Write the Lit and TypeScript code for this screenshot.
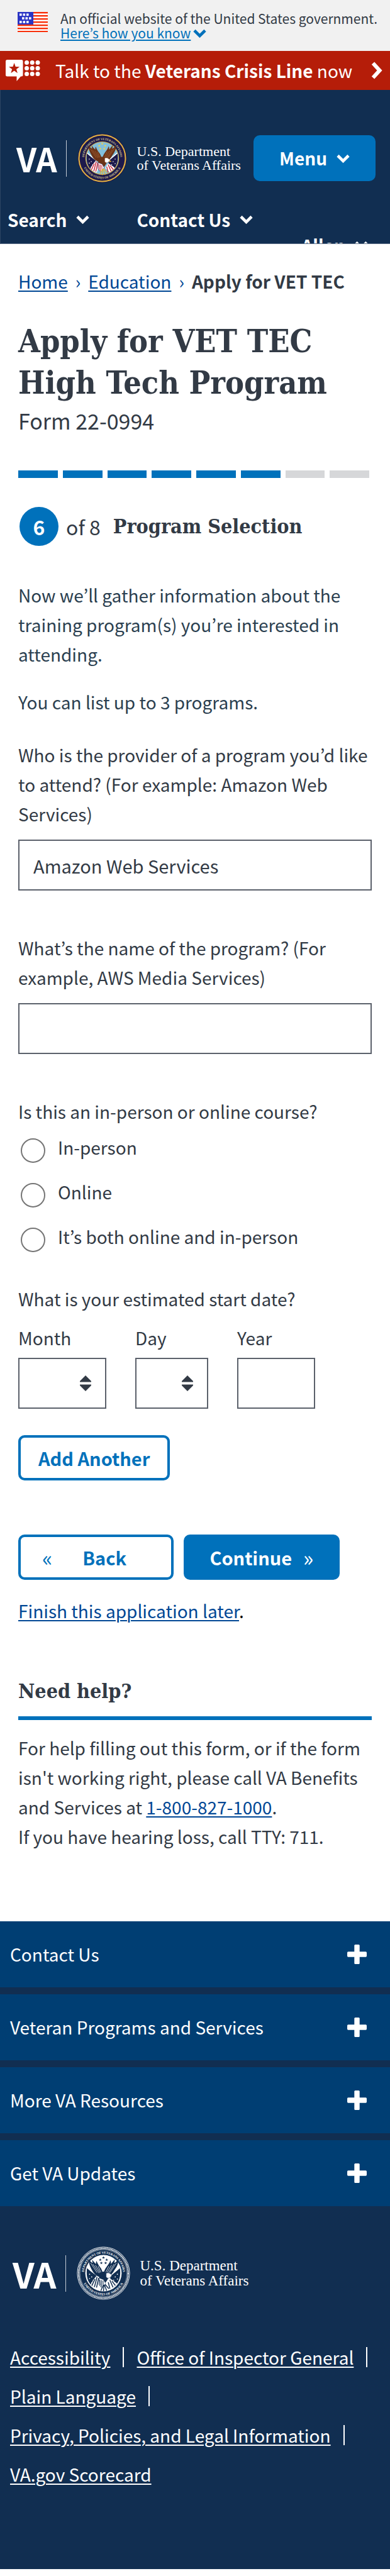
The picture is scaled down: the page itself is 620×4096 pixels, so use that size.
import { LitElement, html, css, svg } from "lit";
import { customElement, state } from "lit/decorators.js";
import { classMap } from "lit/directives/class-map.js";

const chevron = html`<svg class="chevron" viewBox="0 0 21 16" aria-hidden="true">
  <path d="M2 3.5 10.5 12 19 3.5" fill="none" stroke="currentColor" stroke-width="4.6" />
</svg>`;

const plus = html`<svg class="plus" viewBox="0 0 31 31" aria-hidden="true">
  <rect x="11.3" y="0" width="8.4" height="31" rx="1.6" fill="currentColor" />
  <rect x="0" y="11.3" width="31" height="8.4" rx="1.6" fill="currentColor" />
</svg>`;

const sorter = html`<svg class="sorter" viewBox="0 0 18 25" aria-hidden="true">
  <path d="M9 0 18 9v1.5H0V9zM0 14.500h18V16l-9 9-9-9z" fill="#323a45" />
</svg>`;

const star = (x: number, y: number, r: number, fill: string) => {
  const pts = Array.from({ length: 10 }, (_, i) => {
    const q = i % 2 ? r * 0.4 : r;
    const a = (Math.PI / 5) * i - Math.PI / 2;
    return `${(x + q * Math.cos(a)).toFixed(2)},${(y + q * Math.sin(a)).toFixed(2)}`;
  }).join(" ");
  return svg`<polygon points=${pts} fill=${fill} />`;
};

const flag = html`<svg class="flag" viewBox="0 0 48 32" aria-hidden="true">
  <rect width="48" height="32" fill="#fff" />
  ${[0, 5, 10, 15, 20, 25, 30].map(
    (y) => svg`<rect y=${y} width="48" height="2.4" fill="#f8300a" />`
  )}
  <rect width="25" height="20" fill="#2a35c4" />
  ${[3, 8.5, 14].map((x) => svg`<rect x=${x} y="2.500" width="3.600" height="3.600" fill="#fff" />
    <rect x=${x + 4} y="8.300" width="3.600" height="3.600" fill="#fff" />
    <rect x=${x} y="14.200" width="3.600" height="3.600" fill="#fff" />`)}
</svg>`;

const crisisIcon = html`<svg class="crisis-icon" viewBox="0 0 55 34" aria-hidden="true">
  <path d="M2.500 0H25a2.500 2.500 0 0 1 2.500 2.500V24a2.500 2.500 0 0 1-2.500 2.500h-1L17.500 34v-7.500h-15A2.500 2.500 0 0 1 0 24V2.500A2.500 2.500 0 0 1 2.500 0z" fill="#fff" />
  ${star(13.6, 14, 9, "#b51d09")}
  ${[33.5, 42.2, 51].map((x) =>
    [4.6, 13.6, 22.6].map((y) => svg`<circle cx=${x} cy=${y} r="3.500" fill="#fff" />`)
  )}
</svg>`;

const wing = "M48 58C40 58 33 53 29 45C25 38 22 31 23 25C26 29 28 30 30 31C29 28 29 27 29 25C32 29 34 31 36 33C36 30 36 29 37 27C39 32 41 35 43 38C46 41 48 46 49 52z";
const wingRight = "M51 58C59 58 66 53 70 45C75 38 79 31 77 24C75 28 72 30 70 31C71 28 71 26 71 24C68 28 66 30 64 33C64 30 64 28 63 26C61 32 58 35 56 38C53 42 51 46 50 52z";

const seal = (tone: "colour" | "mono") => {
  const c = tone === "colour";
  const navy = c ? "#1d1a4c" : "#112e51";
  const eagle = c ? "#6b3317" : "#112e51";
  const feather = c ? "#a8663a" : "#fff";
  const red = c ? "#c8283c" : "#112e51";
  const letter = c ? "#d9c98f" : "#fff";
  return html`<svg class="seal" viewBox="0 0 100 100" role="img" aria-label="Seal of the Department of Veterans Affairs">
    <defs>
      <path id="arc-top" d="M14.2 57A36.500 36.500 0 1 1 85.800 57" />
      <path id="arc-bottom" d="M8.500 50A41.500 41.500 0 0 0 91.500 50" />
      <clipPath id="disc"><circle cx="50" cy="50" r="32" /></clipPath>
    </defs>
    <circle cx="50" cy="50" r="49.500" fill=${navy} />
    ${c
      ? svg`<circle cx="50" cy="50" r="46.800" fill="none" stroke="#e3b341" stroke-width="2.600" />
          <circle cx="50" cy="50" r="33" fill="#82bfdc" stroke="#d9b24a" stroke-width="1.400" />`
      : svg`<circle cx="50" cy="50" r="49" fill="none" stroke="#fff" stroke-width="1" />
          <circle cx="50" cy="50" r="46.200" fill="none" stroke="#fff" stroke-width="3" stroke-dasharray="1.600 1" />
          <circle cx="50" cy="50" r="43.900" fill="none" stroke="#fff" stroke-width=".5" />
          <circle cx="50" cy="50" r="34" fill="#fff" />`}
    <g class="ring" fill=${letter}>
      <text font-size="5.900" text-anchor="middle"><textPath href="#arc-top" startOffset="50%">DEPARTMENT OF VETERANS AFFAIRS</textPath></text>
      <text font-size="6.200" text-anchor="middle"><textPath href="#arc-bottom" startOffset="50%">UNITED STATES OF AMERICA</textPath></text>
    </g>
    <g clip-path="url(#disc)">
      <path d="M19 40C24 45 30 50 37 54L38 74 30 76C21 70 17 55 19 40z" fill=${navy} />
      <path d="M81 40C76 45 70 50 63 54L62 74 70 76C79 70 83 55 81 40z" fill=${navy} />
      ${[[24, 52], [28, 57], [24, 60], [31, 63], [28, 68], [76, 52], [72, 57], [76, 61], [69, 63], [72, 68]].map(
        ([x, y]) => svg`<circle cx=${x} cy=${y} r="1" fill="#fff" />`
      )}
      <path d="M19 39 40 56M81 39 62 55" stroke="#fff" stroke-width="2" />
      <path d="M37 55C31 62 27 68 25 74L39 79 44 66zM62 60C68 64 75 68 79 73L66 79 56 70z" fill="#fff" />
      <path d="M38 57 33 76M41 59 37 77M34 61 28 74M62 63 68 77M66 65 73 74M59 67 62 79" stroke=${red} stroke-width="1.800" />
    </g>
    <path d=${wing} fill=${eagle} />
    <path d=${wingRight} fill=${eagle} />
    <path d="M26 31 38 49M30 33 42 50M35 35 45 51M40 37 47 52M74 31 62 49M70 33 59 50M65 35 56 50M60 37 53 51" stroke=${feather} stroke-width=".9" />
    <path d="M42 50C46 46 54 46 59 50 62 53 58 64 53 68 48 70 43 66 42 60z" fill=${eagle} />
    <path d="M55 50C60 48 65 51 66 56L63 57C61 60 57 60 55 57z" fill="#fff" stroke=${eagle} stroke-width=".6" />
    <path d="M65 54 69 57 64 58z" fill=${c ? "#e6b52f" : navy} />
    <path d="M42 59 50 62 54 69 47 78 41 71z" fill="#fff" stroke=${navy} stroke-width=".7" />
    <path d="M43 62 43.500 73M46 63V76M49 64 49.500 74" stroke=${red} stroke-width="1.400" />
    <path d="M50 72 45 83M51 72 50 84M52 72 56 83M53 71 60 79" stroke=${c ? "#e0b23a" : navy} stroke-width="1.700" />
    ${[[50, 21], [44, 25], [56, 25], [46, 31], [54, 31]].map(([x, y]) => star(x, y, 2.8, c ? "#f0d14a" : navy))}
  </svg>`;
};

const logo = (tone: "colour" | "mono") => html`<a class="logo logo-${tone}" href="#home">
  <span class="va">VA</span>
  <span class="bar"></span>
  ${seal(tone)}
  <span class="dept">U.S. Department<br />of Veterans Affairs</span>
</a>`;

@customElement("app-root")
export class AppRoot extends LitElement {
  @state() private step = 6;
  private readonly steps = 8;

  static styles = css`
    :host {
      display: block;
      background: #fff;
      color: #323a45;
      font: 400 28px/47px "Noto Sans CJK JP", "Open Sans", sans-serif;
    }
    * { box-sizing: border-box; }
    h1, h2, p, fieldset, legend, ul, ol { margin: 0; padding: 0; border: 0; }
    ul, ol { list-style: none; }
    button, input, select { font: inherit; color: inherit; margin: 0; }
    button { cursor: pointer; border: 0; background: none; padding: 0; text-align: left; }
    a { color: #004795; text-decoration-thickness: 2px; text-underline-offset: 3px; }
    svg { display: block; flex: none; }

    .gov { display: flex; gap: 20px; background: #f1f1f1; padding: 18px 16px 17px 28px; font-size: 21px; line-height: 23px; }
    .flag { width: 48px; height: 32px; margin-top: 1px; }
    .know { display: flex; align-items: center; gap: 4px; color: #0071bb; }
    .know span { text-decoration: underline; text-decoration-thickness: 2px; text-underline-offset: 2px; }
    .chevron { width: 21px; height: 16px; }

    .crisis { display: flex; align-items: center; background: #b51d09; color: #fff; line-height: 62px; padding: 0 12px 0 9px; text-decoration: none; }
    .crisis-icon { width: 55px; height: 34px; margin-right: 24px; }
    .crisis-text { flex: 1; }
    .crisis-arrow { width: 18px; height: 28px; }

    .top { background: #112e51; color: #fff; height: 245px; overflow: hidden; padding: 69px 23px 0 11px; border-left: 1px solid #2d4463; border-bottom: 1px solid #5c6f87; }
    .brand { display: flex; align-items: center; justify-content: space-between; padding-left: 14px; }
    .logo { display: flex; align-items: center; color: #fff; text-decoration: none; }
    .va { font-weight: 700; font-size: 52px; line-height: 60px; }
    .bar { width: 1px; height: 58px; background: #c3cad4; margin: 0 17px 0 14px; }
    .seal { width: 79px; height: 79px; }
    .ring { font-family: "Liberation Serif", serif; font-weight: 700; }
    .dept { font: 22px/22px "Liberation Serif", serif; margin-left: 16px; white-space: nowrap; }
    .logo-mono .va { font-size: 56px; }
    .logo-mono .seal { width: 85px; height: 85px; }
    .logo-mono .dept { font-size: 23px; line-height: 24px; }
    .menu { display: flex; align-items: center; justify-content: center; gap: 15px; width: 194px; height: 73px; border-radius: 10px; background: #0071bb; font-weight: 700; }
    .nav { display: flex; margin-top: 41px; font-weight: 700; line-height: 34px; }
    .nav button { display: flex; align-items: center; gap: 15px; height: 34px; line-height: 34px; }
    .nav .contact { margin-left: 75px; }
    .nav .user { margin: 41px 0 0 auto; padding-right: 12px; }

    main { padding: 39px 29px 111px; }
    .crumbs { display: flex; flex-wrap: wrap; gap: 12px; line-height: 40px; }
    .crumbs li { display: flex; gap: 12px; }
    .crumbs .sep { color: #004795; }
    h1, h2 { font-family: "DejaVu Serif Condensed", "DejaVu Serif", serif; font-weight: 700; color: #323a45; }
    h1 { font-size: 50px; line-height: 66px; margin-top: 43px; }
    h2 { font-size: 32px; line-height: 40px; }
    .form-id { font-size: 34px; line-height: 48px; margin-top: 3px; }
    .progress { display: flex; gap: 8px; margin: 55px 4px 46px 0; }
    .segment { flex: 1; height: 12px; background: #d6d7d9; }
    .segment.done { background: #0071bb; }
    .step { display: flex; align-items: center; }
    .step-no { display: grid; place-items: center; width: 62px; height: 62px; margin: 0 12px 0 2px; border-radius: 50%; background: #0071bb; color: #fff; font-weight: 700; font-size: 32px; }
    .step-of { font-size: 32px; margin-right: 20px; }
    .intro { color: #2b3f50; margin-top: 55px; }
    .intro + .intro { margin-top: 29px; }
    .field { display: block; margin-top: 37px; }
    .field + .field, .field + fieldset { margin-top: 68px; }
    label { display: block; }
    .box { display: block; width: 100%; height: 81px; border: 2px solid #5b616b; border-radius: 0; background: #fff; padding: 0 22px; font-size: 29px; appearance: none; outline: 0; }
    .field .box { margin-top: 17px; }
    .options { display: grid; gap: 23px; margin-top: 10px; }
    .option { display: flex; gap: 20px; padding-left: 4px; }
    .option input { appearance: none; flex: none; width: 39px; height: 39px; margin-top: 9px; border: 2px solid #757575; border-radius: 50%; background: #fff; }
    .option input:checked { box-shadow: inset 0 0 0 6px #fff; background: #0071bb; }
    .date { margin-top: 51px; }
    .date-row { display: flex; gap: 46px; margin-top: 15px; }
    .month { width: 140px; }
    .day { width: 116px; }
    .year { width: 124px; }
    .picker { display: grid; align-items: center; margin-top: 8px; }
    .picker > * { grid-area: 1 / 1; }
    .sorter { width: 18px; height: 25px; justify-self: end; margin-right: 24px; pointer-events: none; }
    .btn { display: flex; align-items: center; height: 72px; border: 4px solid #0071bb; border-radius: 10px; color: #0071bb; background: #fff; font-size: 29px; font-weight: 700; }
    .add { margin-top: 42px; padding: 0 28px; }
    .actions { display: flex; gap: 16px; margin: 86px 0 26px; }
    .actions .btn { flex: 0 0 44%; }
    .back { padding-left: 34px; gap: 48px; }
    .next { background: #0071bb; color: #fff; justify-content: center; gap: 18px; }
    .arrows { font-weight: 400; font-size: 34px; }
    .stop { color: #000; }
    .help { margin-top: 84px; padding-bottom: 20px; border-bottom: 6px solid #0071bb; }
    .help-text { margin-top: 21px; }

    footer { background: #112e51; color: #fff; padding-bottom: 120px; margin-bottom: 14px; }
    .groups { display: grid; gap: 11px; }
    .groups button { display: flex; align-items: center; justify-content: space-between; width: 100%; height: 105px; padding: 0 37px 0 16px; background: #003e73; }
    .plus { width: 31px; height: 31px; }
    .foot-brand { padding: 64px 20px 60px; }
    .links { display: flex; flex-wrap: wrap; padding-left: 16px; line-height: 62px; }
    .links li { display: flex; align-items: center; }
    .links li:not(:last-child)::after { content: ""; width: 2px; height: 32px; margin: 0 20px; background: #fff; }
    .links li:nth-child(2)::after { margin-right: 0; }
    .links a { color: #fff; }
  `;

  private range(from: number, to: number) {
    return Array.from({ length: to - from + 1 }, (_, i) => html`<option>${from + i}</option>`);
  }

  render() {
    return html`
      <div class="gov">
        ${flag}
        <div>
          <div>An official website of the United States government.</div>
          <button class="know"><span>Here’s how you know</span>${chevron}</button>
        </div>
      </div>
      <a class="crisis" href="#crisis">
        ${crisisIcon}
        <span class="crisis-text">Talk to the <b>Veterans Crisis Line</b> now</span>
        <svg class="crisis-arrow" viewBox="0 0 18 28" aria-hidden="true">
          <path d="M3 2.500 13.500 14 3 25.500" fill="none" stroke="#fff" stroke-width="6" />
        </svg>
      </a>
      <header class="top">
        <div class="brand">
          ${logo("colour")}
          <button class="menu">Menu ${chevron}</button>
        </div>
        <nav class="nav">
          <button>Search ${chevron}</button>
          <button class="contact">Contact Us ${chevron}</button>
          <button class="user">Allen ${chevron}</button>
        </nav>
      </header>

      <main>
        <nav aria-label="Breadcrumb">
          <ol class="crumbs">
            <li><a href="#home">Home</a><span class="sep">›</span></li>
            <li><a href="#education">Education</a><span class="sep">›</span></li>
            <li><b>Apply for VET TEC</b></li>
          </ol>
        </nav>
        <h1>Apply for VET TEC<br />High Tech Program</h1>
        <p class="form-id">Form 22-0994</p>
        <div class="progress">
          ${Array.from(
            { length: this.steps },
            (_, i) => html`<div class=${classMap({ segment: true, done: i < this.step })}></div>`
          )}
        </div>
        <div class="step">
          <span class="step-no">${this.step}</span>
          <span class="step-of">of ${this.steps}</span>
          <h2>Program Selection</h2>
        </div>

        <p class="intro">Now we’ll gather information about the training program(s) you’re interested in attending.</p>
        <p class="intro">You can list up to 3 programs.</p>

        <div class="field">
          <label for="provider">Who is the provider of a program you’d like to attend? (For example: Amazon Web Services)</label>
          <input class="box" id="provider" type="text" value="Amazon Web Services" />
        </div>
        <div class="field">
          <label for="program">What’s the name of the program? (For example, AWS Media Services)</label>
          <input class="box" id="program" type="text" />
        </div>
        <fieldset>
          <legend>Is this an in-person or online course?</legend>
          <div class="options">
            ${["In-person", "Online", "It’s both online and in-person"].map(
              (text, i) => html`<div class="option">
                <input type="radio" name="course" id="course-${i}" />
                <label for="course-${i}">${text}</label>
              </div>`
            )}
          </div>
        </fieldset>
        <fieldset class="date">
          <legend>What is your estimated start date?</legend>
          <div class="date-row">
            <div class="month">
              <label for="month">Month</label>
              <div class="picker"><select class="box" id="month"><option></option>${this.range(1, 12)}</select>${sorter}</div>
            </div>
            <div class="day">
              <label for="day">Day</label>
              <div class="picker"><select class="box" id="day"><option></option>${this.range(1, 31)}</select>${sorter}</div>
            </div>
            <div class="year">
              <label for="year">Year</label>
              <div class="picker"><input class="box" id="year" type="text" inputmode="numeric" /></div>
            </div>
          </div>
        </fieldset>
        <button class="btn add">Add Another</button>
        <div class="actions">
          <button class="btn back"><span class="arrows">«</span>Back</button>
          <button class="btn next">Continue<span class="arrows">»</span></button>
        </div>
        <p><a href="#later">Finish this application later</a><span class="stop">.</span></p>

        <h2 class="help">Need help?</h2>
        <p class="help-text">
          For help filling out this form, or if the form isn't working right, please call VA Benefits and Services at
          <a href="tel:18008271000">1-800-827-1000</a>.<br />If you have hearing loss, call TTY: 711.
        </p>
      </main>

      <footer>
        <div class="groups">
          ${["Contact Us", "Veteran Programs and Services", "More VA Resources", "Get VA Updates"].map(
            (t) => html`<button>${t} ${plus}</button>`
          )}
        </div>
        <div class="foot-brand">${logo("mono")}</div>
        <ul class="links">
          ${["Accessibility", "Office of Inspector General", "Plain Language", "Privacy, Policies, and Legal Information", "VA.gov Scorecard"].map(
            (t) => html`<li><a href="#links">${t}</a></li>`
          )}
        </ul>
      </footer>
    `;
  }
}
